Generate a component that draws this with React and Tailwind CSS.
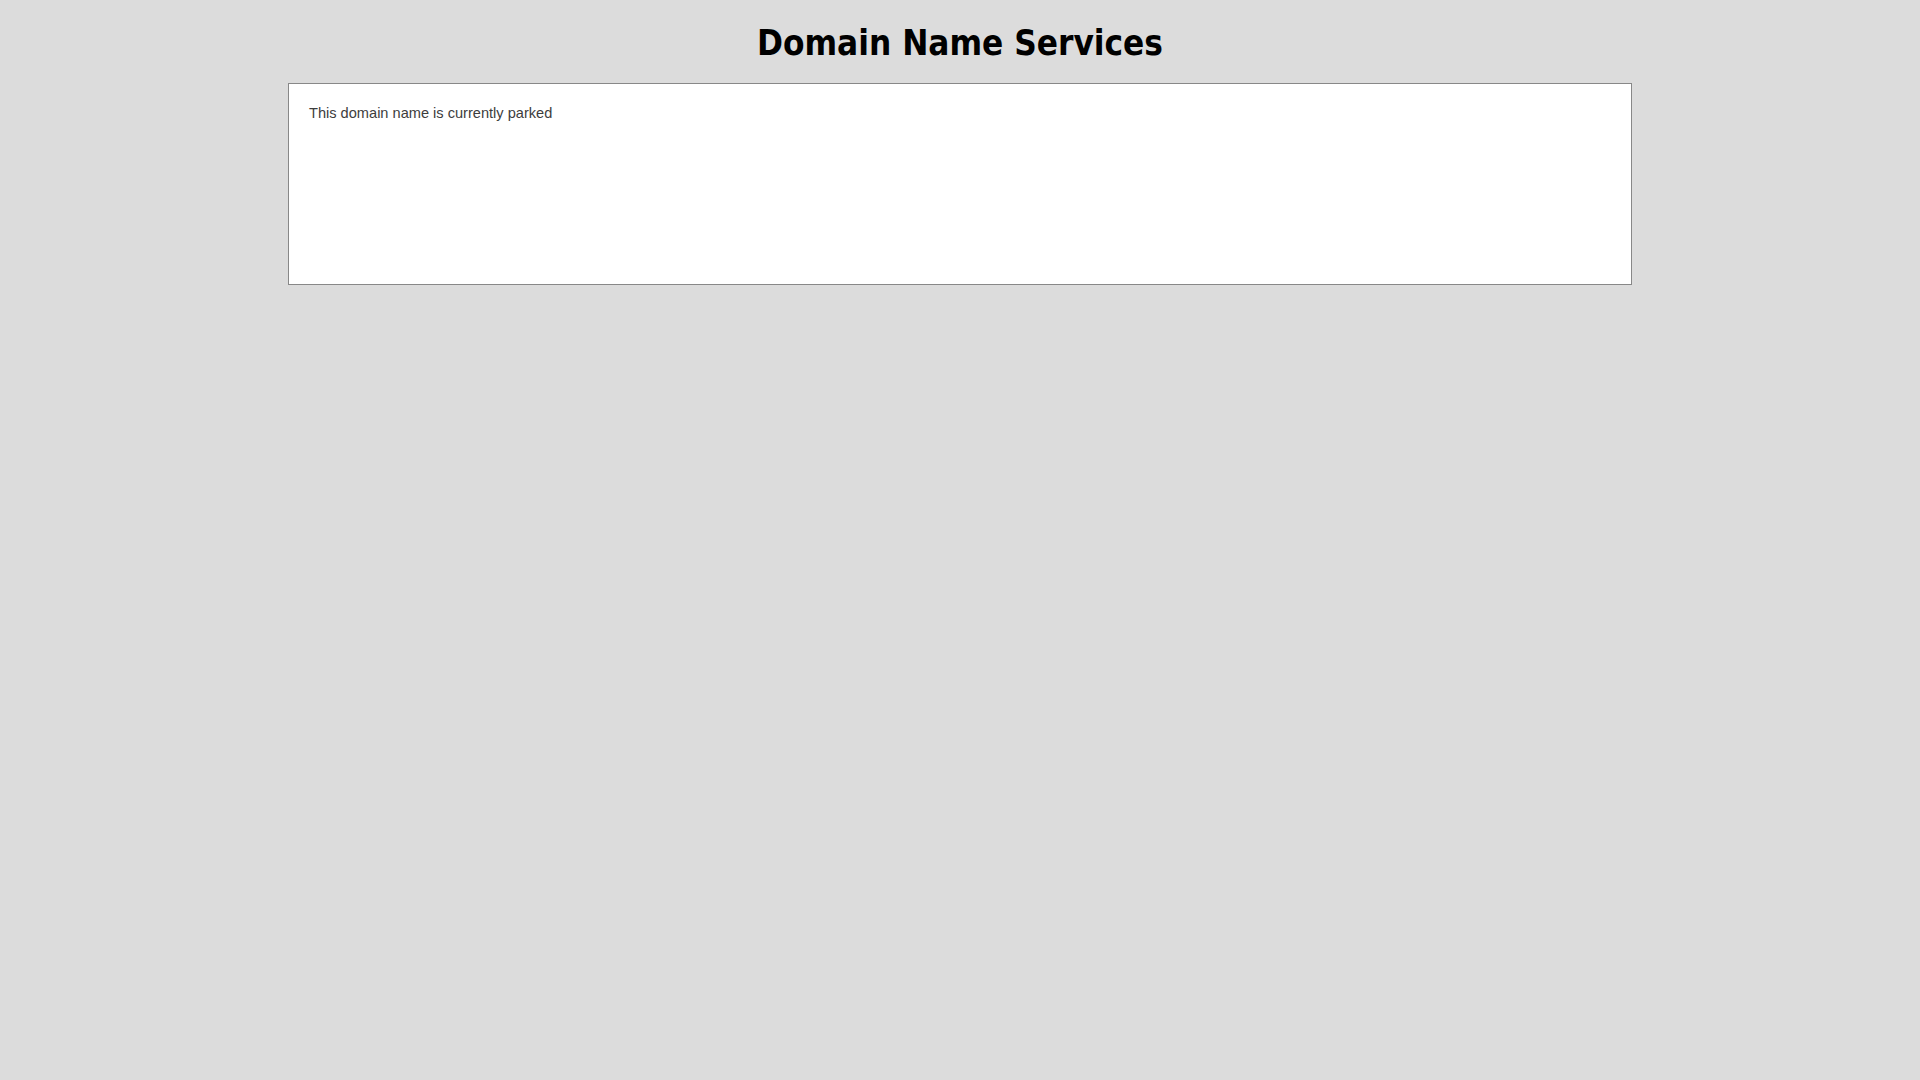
export default function App() {
  return (
    <div className="min-h-screen bg-[#dcdcdc] font-['Liberation_Sans',Arial,sans-serif]">
      <h1 className="pt-[23px] pb-[20px] text-center font-['DejaVu_Sans_Condensed','DejaVu_Sans',Tahoma,sans-serif] text-[34.8px] font-bold leading-[40px] text-black">
        Domain Name Services
      </h1>
      <div className="mx-auto w-[70%] min-h-[202px] border border-[#888888] bg-white px-[20px] pt-[21px] pb-[20px]">
        <p className="text-[14.6px] leading-[17px] text-[#3d3d3d]">This domain name is currently parked</p>
      </div>
    </div>
  );
}
